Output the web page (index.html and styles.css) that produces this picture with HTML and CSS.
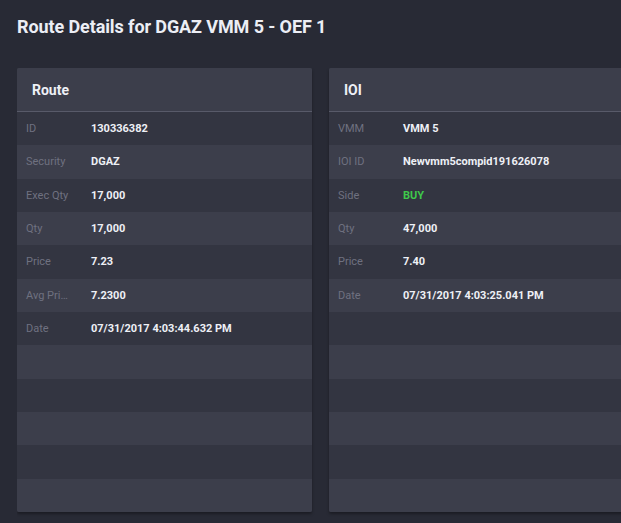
FILE: index.html
```html
<!DOCTYPE html>
<html>
<head>
<meta charset="utf-8">
<link rel="stylesheet" href="styles.css">
</head>
<body>
<h1 class="title">Route Details for DGAZ VMM 5 - OEF 1</h1>
<div class="panels">
  <section class="panel">
    <header class="panel-head">Route</header>
    <div class="rows">
      <div class="row"><span class="label">ID</span><span class="value">130336382</span></div>
      <div class="row"><span class="label">Security</span><span class="value">DGAZ</span></div>
      <div class="row"><span class="label">Exec Qty</span><span class="value">17,000</span></div>
      <div class="row"><span class="label">Qty</span><span class="value">17,000</span></div>
      <div class="row"><span class="label">Price</span><span class="value">7.23</span></div>
      <div class="row"><span class="label">Avg Price</span><span class="value">7.2300</span></div>
      <div class="row"><span class="label">Date</span><span class="value">07/31/2017 4:03:44.632 PM</span></div>
      <div class="row"></div>
      <div class="row"></div>
      <div class="row"></div>
      <div class="row"></div>
      <div class="row"></div>
    </div>
  </section>
  <section class="panel">
    <header class="panel-head">IOI</header>
    <div class="rows">
      <div class="row"><span class="label">VMM</span><span class="value">VMM 5</span></div>
      <div class="row"><span class="label">IOI ID</span><span class="value">Newvmm5compid191626078</span></div>
      <div class="row"><span class="label">Side</span><span class="value buy">BUY</span></div>
      <div class="row"><span class="label">Qty</span><span class="value">47,000</span></div>
      <div class="row"><span class="label">Price</span><span class="value">7.40</span></div>
      <div class="row"><span class="label">Date</span><span class="value">07/31/2017 4:03:25.041 PM</span></div>
      <div class="row"></div>
      <div class="row"></div>
      <div class="row"></div>
      <div class="row"></div>
      <div class="row"></div>
      <div class="row"></div>
    </div>
  </section>
</div>
</body>
</html>
```
FILE: styles.css
```css
html, body {
  margin: 0;
  padding: 0;
  background: #282a35;
  overflow: hidden;
}
body {
  padding: 16px 0 0 17px;
  font-family: Roboto, "Liberation Sans", sans-serif;
  color: #e8e9f0;
}
.title {
  margin: 0;
  font-size: 18px;
  font-weight: 700;
  line-height: 21px;
  color: #eceef5;
  letter-spacing: -0.1px;
}
.panels {
  display: flex;
  gap: 17px;
  margin-top: 31px;
  padding-bottom: 6px;
  overflow: hidden;
}
.panel {
  flex: 0 0 295px;
  border-radius: 2px;
  overflow: hidden;
  background: #3c3e4b;
  box-shadow: 0 2px 3px rgba(0, 0, 0, 0.35);
}
.panel-head {
  height: 43px;
  border-bottom: 1px solid #585a69;
  background: #3c3e4b;
  display: flex;
  align-items: center;
  padding-left: 15px;
  font-size: 14px;
  font-weight: 700;
  color: #eef0f6;
}
.row {
  height: 33.33px;
  display: flex;
  align-items: center;
  font-size: 11px;
}
.row:nth-child(odd) {
  background: #333541;
}
.row:nth-child(even) {
  background: #3c3e4b;
}
.label {
  flex: 0 0 45px;
  padding-left: 9px;
  padding-right: 20px;
  color: #6f7180;
  white-space: nowrap;
  overflow: hidden;
  text-overflow: ellipsis;
}
.value {
  font-weight: 700;
  color: #eef0f6;
  white-space: nowrap;
}
.value.buy {
  color: #3fc94b;
}
```
